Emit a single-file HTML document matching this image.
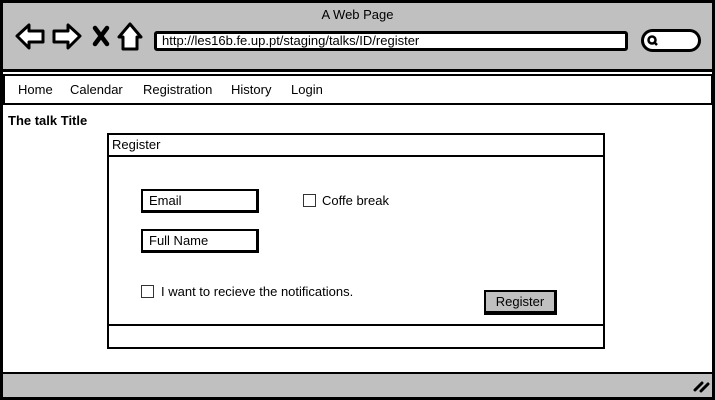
<!DOCTYPE html>
<html><head><style>
body{margin:0;width:715px;height:400px;overflow:hidden;background:#fff;font-family:"Liberation Sans",sans-serif;color:#000;position:relative}
.a{position:absolute;box-sizing:border-box}
</style></head><body>
<div class="a" style="left:0;top:0;width:715px;height:400px;border:3px solid #000;background:#fff"></div>
<div class="a" style="left:3px;top:3px;width:709px;height:69px;background:#c0c0c0;border-bottom:3px solid #000"></div>
<div class="a" style="left:0;top:7px;width:715px;text-align:center;font-size:13px">A Web Page</div>
<svg class="a" style="left:14px;top:22px" width="132" height="30" viewBox="0 0 132 30">
<path d="M3 14 L15 3 L15 9 L29 9 L29 20 L15 20 L15 26 Z" fill="#fff" stroke="#000" stroke-width="3" stroke-linejoin="round"/>
<path d="M66 14 L54 3 L54 9 L40 9 L40 20 L54 20 L54 26 Z" fill="#fff" stroke="#000" stroke-width="3" stroke-linejoin="round"/>
<path d="M81 6 L93 22 M93 6 L81 22" stroke="#000" stroke-width="4.5" stroke-linecap="round"/>
<path d="M116 2 L105 15 L109 15 L109 27 L123 27 L123 15 L127 15 Z" fill="#fff" stroke="#000" stroke-width="3" stroke-linejoin="round"/>
</svg>
<div class="a" style="left:154px;top:31px;width:474px;height:20px;background:#fff;border:3px solid #000;border-radius:3px;font-size:13px;padding-left:5px;line-height:14px">http://les16b.fe.up.pt/staging/talks/ID/register</div>
<div class="a" style="left:641px;top:29px;width:60px;height:23px;background:#fff;border:3px solid #000;border-radius:12px"></div>
<svg class="a" style="left:646px;top:34px" width="14" height="14"><circle cx="6" cy="6" r="3.5" fill="none" stroke="#000" stroke-width="2.5"/><path d="M8 8 L11 11" stroke="#000" stroke-width="2.5"/></svg>
<div class="a" style="left:3px;top:75px;width:710px;height:30px;border:2px solid #000;border-top:0;background:#fff"></div>
<div class="a" style="left:3px;top:74px;width:710px;height:2px;background:#000"></div>
<div class="a" style="left:18px;top:82px;font-size:13px">Home</div>
<div class="a" style="left:70px;top:82px;font-size:13px">Calendar</div>
<div class="a" style="left:143px;top:82px;font-size:13px">Registration</div>
<div class="a" style="left:231px;top:82px;font-size:13px">History</div>
<div class="a" style="left:291px;top:82px;font-size:13px">Login</div>
<div class="a" style="left:8px;top:113px;font-size:13px;font-weight:bold">The talk Title</div>
<div class="a" style="left:107px;top:133px;width:498px;height:216px;border:2px solid #000;background:#fff"></div>
<div class="a" style="left:107px;top:155px;width:498px;height:2px;background:#000"></div>
<div class="a" style="left:107px;top:324px;width:498px;height:2px;background:#000"></div>
<div class="a" style="left:112px;top:137px;font-size:13px">Register</div>
<div class="a" style="left:141px;top:189px;width:118px;height:24px;border:2px solid #000;border-right-width:3px;border-bottom-width:3px;font-size:13px;padding:2px 0 0 6px">Email</div>
<div class="a" style="left:141px;top:229px;width:118px;height:24px;border:2px solid #000;border-right-width:3px;border-bottom-width:3px;font-size:13px;padding:2px 0 0 6px">Full Name</div>
<div class="a" style="left:303px;top:194px;width:13px;height:13px;border:1.5px solid #333;background:#fff"></div>
<div class="a" style="left:322px;top:193px;font-size:13px">Coffe break</div>
<div class="a" style="left:141px;top:285px;width:13px;height:13px;border:1.5px solid #333;background:#fff"></div>
<div class="a" style="left:161px;top:284px;font-size:13px">I want to recieve the notifications.</div>
<div class="a" style="left:484px;top:290px;width:73px;height:25px;background:#c0c0c0;border:2px solid #000;border-right-width:3px;border-bottom-width:4px;font-size:13px;text-align:center;line-height:19px">Register</div>
<div class="a" style="left:3px;top:372px;width:709px;height:25px;background:#c0c0c0;border-top:2px solid #000"></div>
<svg class="a" style="left:692px;top:378px" width="18" height="16"><path d="M3 12 L10 5 M9 13 L16 6" stroke="#000" stroke-width="3" stroke-linecap="round"/></svg>
</body></html>
